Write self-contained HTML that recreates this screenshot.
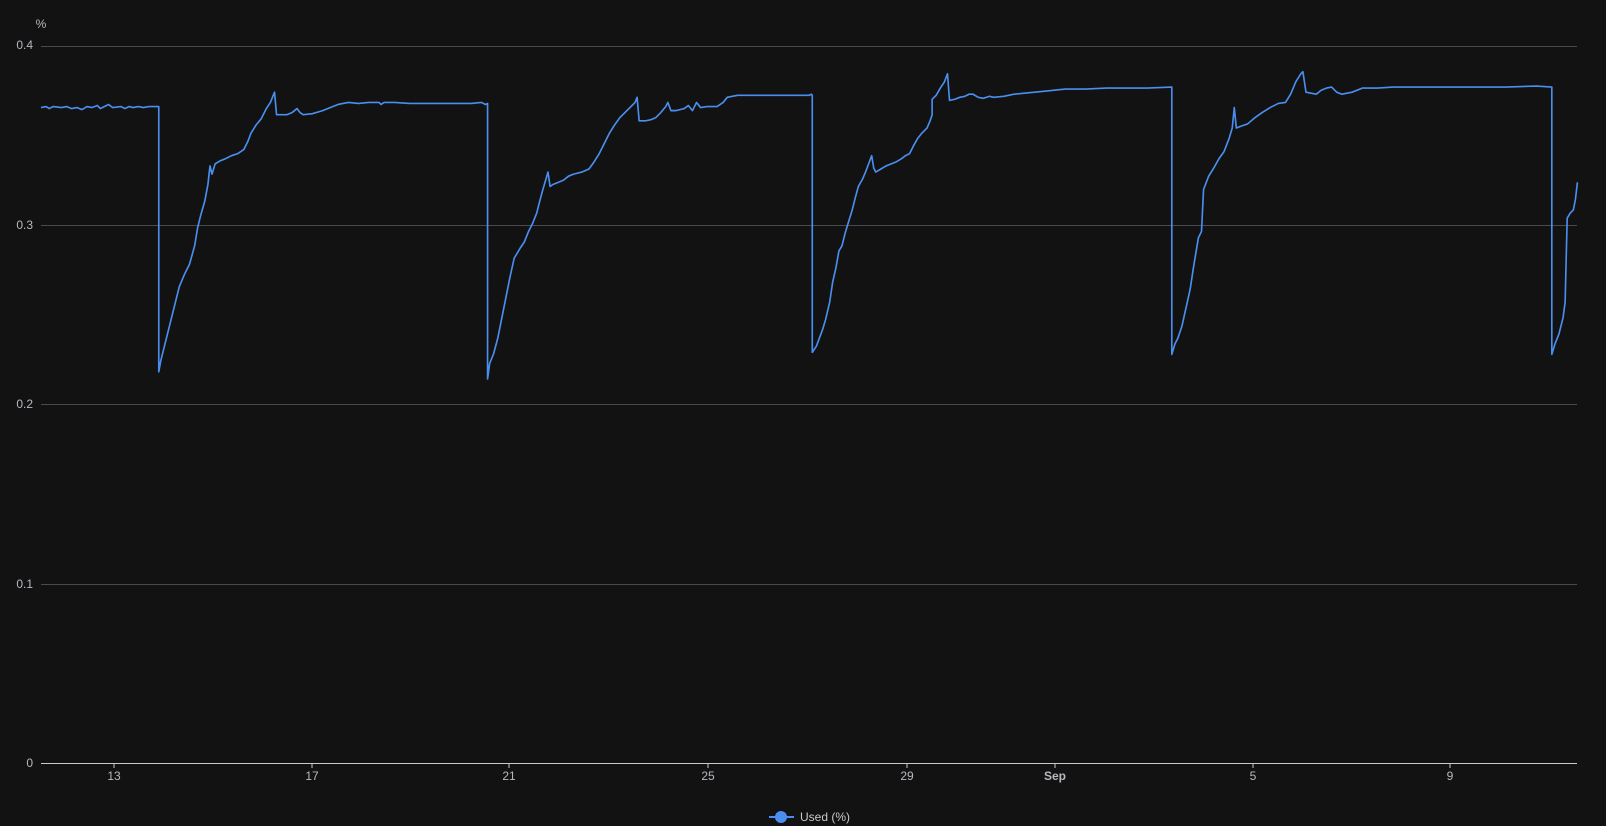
<!DOCTYPE html>
<html><head><meta charset="utf-8"><style>
html,body{margin:0;padding:0;background:#121212;width:1606px;height:826px;overflow:hidden;font-family:"Liberation Sans",sans-serif}
</style></head><body>
<svg width="1606" height="826" viewBox="0 0 1606 826" xmlns="http://www.w3.org/2000/svg">
<rect width="1606" height="826" fill="#121212"/>
<g stroke="#4a4a50" stroke-width="1">
<line x1="41" y1="46.5" x2="1577" y2="46.5"/>
<line x1="41" y1="225.5" x2="1577" y2="225.5"/>
<line x1="41" y1="404.5" x2="1577" y2="404.5"/>
<line x1="41" y1="584.5" x2="1577" y2="584.5"/>
</g>
<line x1="41" y1="763.5" x2="1577" y2="763.5" stroke="#c8c8d0" stroke-width="1"/>
<g stroke="#c8c8d0" stroke-width="1">
<line x1="114" y1="763" x2="114" y2="768"/><line x1="312" y1="763" x2="312" y2="768"/>
<line x1="509" y1="763" x2="509" y2="768"/><line x1="708" y1="763" x2="708" y2="768"/>
<line x1="907" y1="763" x2="907" y2="768"/><line x1="1055" y1="763" x2="1055" y2="768"/>
<line x1="1253" y1="763" x2="1253" y2="768"/><line x1="1450" y1="763" x2="1450" y2="768"/>
</g>
<g fill="#b8b8c0" font-size="12" text-anchor="end">
<text x="33" y="49">0.4</text><text x="33" y="229">0.3</text><text x="33" y="408">0.2</text><text x="33" y="588">0.1</text><text x="33" y="767">0</text>
</g>
<text x="41" y="28" fill="#b8b8c0" font-size="12" text-anchor="middle">%</text>
<g fill="#b8b8c0" font-size="12" text-anchor="middle">
<text x="114" y="780">13</text><text x="312" y="780">17</text><text x="509" y="780">21</text><text x="708" y="780">25</text>
<text x="907" y="780">29</text><text x="1055" y="780" font-weight="bold">Sep</text><text x="1253" y="780">5</text><text x="1450" y="780">9</text>
</g>
<g transform="scale(1.0243)">
<polyline fill="none" stroke="#4a8ff0" stroke-width="1.6" stroke-linejoin="round" points="
40,105 45,104 48,106 52,104 60,105 65,104 70,106 75,105 80,107 85,104 90,105 95,103 98,106 102,104 106,102 110,105 118,104 122,106 126,104 130,105 135,104 140,105 145,104 155,104 155,363
157,352 160,340 165,320 170,300 175,280 180,268 185,258 190,240 193,222 196,210 200,196 203,180 205,162 207,170 210,160 215,157 220,155 226,152 232,150 238,146 242,138 245,130 250,122 255,116 260,106 264,100 268,90 270,112 275,112 280,112 285,110 290,106 293,110 296,112 305,111 315,108 325,104 330,102 340,100 350,101 360,100 370,100 372,102 375,100 385,100 400,101 430,101 460,101 470,100 474,102 476,101 476,370
478,355 482,345 486,330 490,310 494,290 498,270 502,252 508,242 512,236 516,226 520,218 524,208 527,196 530,185 535,168 537,182 540,180 545,178 550,176 555,172 560,170 568,168 575,165 580,158 585,150 590,140 595,130 600,122 605,115 610,110 615,105 620,100 622,95 624,118 630,118 635,117 640,115 645,110 650,104 652,100 655,108 660,108 668,106 672,103 676,108 680,100 684,105 690,104 700,104 706,100 710,95 720,93 760,93 790,93 792,92 793,93 793,344
797,338 800,330 803,322 806,312 810,295 813,275 816,262 819,245 822,240 825,228 828,218 832,205 835,193 838,182 842,175 845,168 848,160 851,152 853,164 855,168 860,165 865,162 870,160 875,158 880,155 884,152 888,150 892,142 896,135 900,130 905,125 908,118 910,112 910,97 914,93 918,86 922,80 925,72 927,98 932,97 937,95 942,94 946,92 950,92 955,95 960,96 966,94 970,95 980,94 990,92 1000,91 1010,90 1020,89 1040,87 1060,87 1080,86 1100,86 1120,86 1144,85 1144,346
1147,336 1150,330 1154,318 1158,300 1162,282 1165,262 1168,244 1170,232 1173,226 1175,185 1180,172 1185,164 1190,155 1195,148 1200,135 1203,125 1205,105 1207,125 1212,123 1218,121 1225,115 1232,110 1240,105 1248,101 1255,100 1260,92 1265,80 1270,72 1272,70 1275,90 1280,91 1285,92 1290,88 1295,86 1300,85 1305,90 1310,92 1320,90 1330,86 1345,86 1360,85 1380,85 1400,85 1440,85 1470,85 1500,84 1515,85 1515,346
1518,336 1522,326 1526,310 1528,295 1530,213 1533,208 1536,205 1538,195 1540,178"/>
</g>
<line x1="769" y1="817" x2="794" y2="817" stroke="#4a8ff0" stroke-width="2"/>
<circle cx="781" cy="817" r="6" fill="#4a8ff0"/>
<text x="800" y="821" fill="#c8c8d0" font-size="12">Used (%)</text>
</svg>
</body></html>
